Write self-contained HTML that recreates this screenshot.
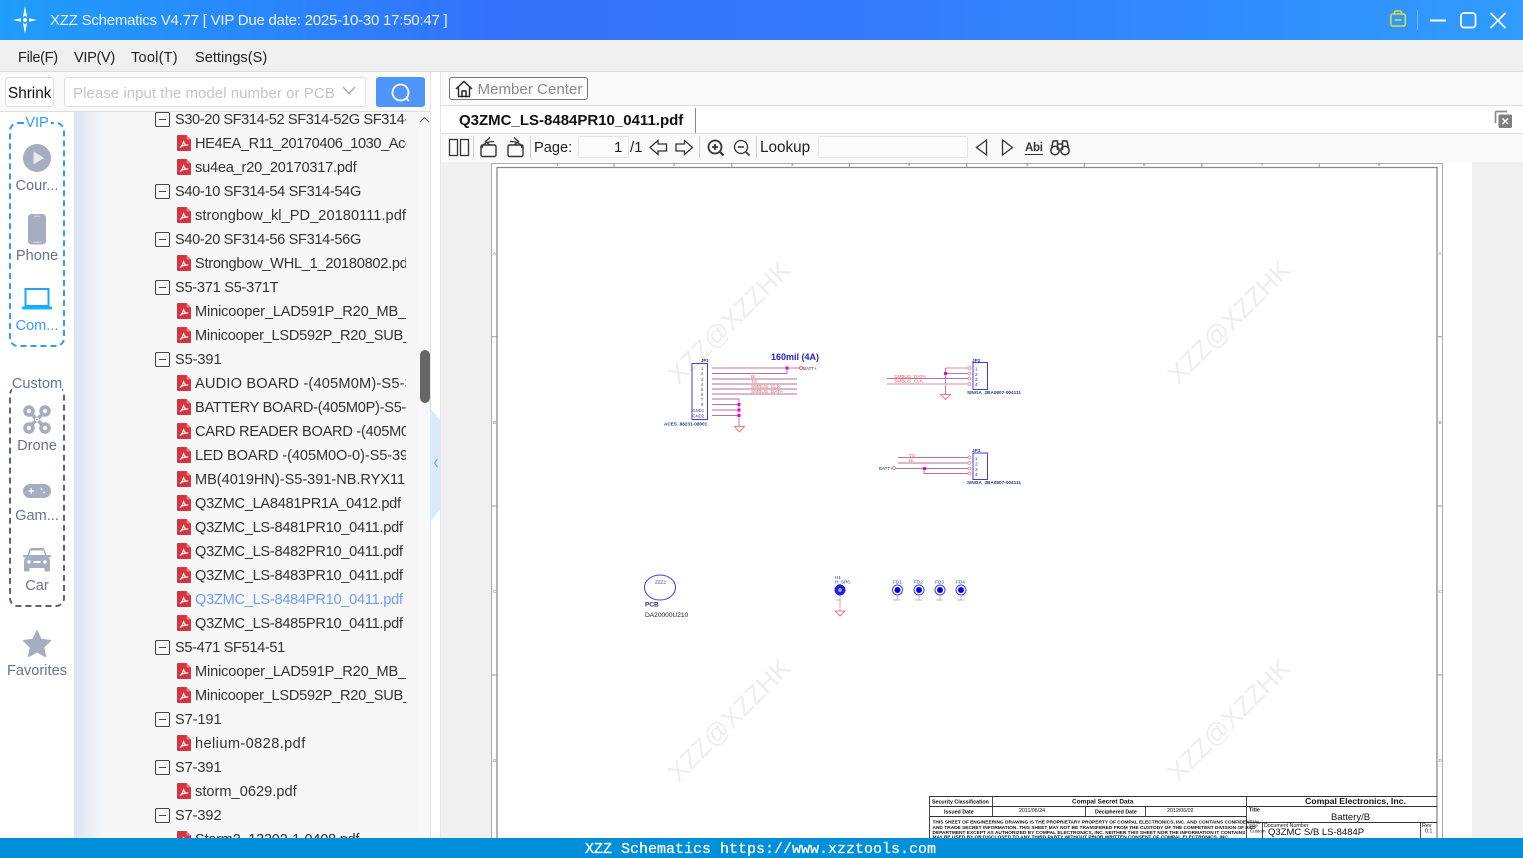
<!DOCTYPE html>
<html><head><meta charset="utf-8"><title>XZZ Schematics</title>
<style>
*{box-sizing:border-box}
html,body{margin:0;padding:0;width:1523px;height:858px;overflow:hidden;background:#fff}
body{font-family:"Liberation Sans","Noto Sans CJK SC",sans-serif;font-size:15px;color:#222;position:relative}
.a{position:absolute}
.t{position:absolute;white-space:nowrap;line-height:20px}
#title{left:0;top:0;width:1523px;height:40px;background:linear-gradient(90deg,#1f9dfb 0,#3373fb 32%,#3478fb 55%,#2f9cfe 100%)}
#menu{left:0;top:40px;width:1523px;height:32px;background:#f0f0f0;border-bottom:1px solid #dcdcdc}
#tree{left:74px;top:112px;width:344px;height:726px;background:linear-gradient(90deg,#d9e3f4 0,#e8ecf5 12px,#f7f7f7 30px);overflow:hidden}
.r{position:absolute;left:0;width:332px;height:24px;line-height:27px;white-space:nowrap;overflow:hidden;color:#333;font-size:14.6px;letter-spacing:-.27px}
.g{padding-left:101px}
.f{padding-left:121px}
.g:before{content:"";position:absolute;left:81px;top:5px;width:13px;height:13px;border:1.3px solid #444;border-radius:2px;background:linear-gradient(#444,#444) center/7px 1.3px no-repeat}
.r svg{position:absolute;left:103px;top:4px;width:14px;height:16px}
.lab{position:absolute;left:0;width:74px;text-align:center;font-size:14.6px;color:#68738c;line-height:21px;white-space:nowrap}
</style></head>
<body>
<svg width="0" height="0" style="position:absolute"><defs>
<symbol id="pdf" viewBox="0 0 14 16"><path d="M1 0H9.500L14 4.500V15a1 1 0 0 1-1 1H1a1 1 0 0 1-1-1V1a1 1 0 0 1 1-1Z" fill="#d6353f"/><path d="M9.500 0L14 4.500H9.500Z" fill="#e47f86"/><path d="M3 12.500C5 11.500 6.500 8 6.500 5.800 6.800 8.500 8.500 10.300 11.200 10.200 8.500 9.700 5.200 10.500 3 12.500Z" fill="none" stroke="#fff" stroke-width="1.100"/></symbol>
</defs></svg>

<!-- title bar -->
<div id="title" class="a"></div>
<svg class="a" style="left:11px;top:5px" width="28" height="30" viewBox="0 0 28 30"><path d="M14 1L16.200 12.500 14 10.500 11.800 12.500ZM14 29L11.800 17.500 14 19.500 16.200 17.500ZM2 15L10 13.300 10 16.700ZM26 15L18 13.300 18 16.700Z" fill="#fff"/><circle cx="14" cy="15" r="2" fill="#fff"/></svg>
<div class="t" style="left:50px;top:11px;color:#e8f2ff;font-size:15px;letter-spacing:-.23px">XZZ Schematics V4.77 [ VIP Due date: 2025-10-30 17:50:47 ]</div>
<svg class="a" style="left:1385px;top:8px" width="130" height="24" viewBox="0 0 130 24" fill="none"><g stroke="#d6e23e" stroke-width="1.500"><rect x="5.800" y="6" width="14.500" height="12" rx="2"/><path d="M9.500 6V4.500a1.500 1.500 0 0 1 1.500-1.500h4a1.500 1.500 0 0 1 1.500 1.500V6M9.500 12H16.500"/></g><path d="M32.500 2V22" stroke="#6fb9fb"/><path d="M45 12.500H61" stroke="#fff" stroke-width="2"/><rect x="76" y="5" width="14.500" height="14.500" rx="3" stroke="#fff" stroke-width="1.700"/><path d="M105.500 5L120.500 20M120.500 5L105.500 20" stroke="#fff" stroke-width="1.700"/></svg>

<!-- menu -->
<div id="menu" class="a"></div>
<div class="t" style="left:18px;top:47.500px;font-size:14.600px;letter-spacing:-.35px">File(F)</div>
<div class="t" style="left:74px;top:47.500px;font-size:14.600px;letter-spacing:-.35px">VIP(V)</div>
<div class="t" style="left:131px;top:47.500px;font-size:14.600px;letter-spacing:.2px">Tool(T)</div>
<div class="t" style="left:195px;top:47.500px;font-size:14.600px">Settings(S)</div>

<!-- left top row -->
<div class="a" style="left:0;top:72px;width:430px;height:40px;background:#fafafa;border-bottom:1px solid #ddd"></div>
<div class="a" style="left:5px;top:77px;width:49px;height:30px;background:#fdfdfd;border:1px solid #ddd;border-radius:3px"></div>
<div class="t" style="left:8px;top:84px;color:#111;font-size:15.300px">Shrink</div>
<div class="a" style="left:64px;top:77px;width:302px;height:30px;background:#fff;border:1px solid #dcdfe6;border-radius:3px"></div>
<div class="t" style="left:73px;top:84px;color:#c2c5cc;font-size:15.100px">Please input the model number or PCB</div>
<svg class="a" style="left:342px;top:85px" width="14" height="12" viewBox="0 0 14 12" fill="none"><path d="M1 2L7 8.500 13 2" stroke="#a9acb3" stroke-width="1.400"/></svg>
<div class="a" style="left:376px;top:77px;width:49px;height:30px;background:#4f95fb;border-radius:3px"></div>
<svg class="a" style="left:389px;top:81px" width="24" height="24" viewBox="0 0 24 24" fill="none"><circle cx="11.500" cy="11.500" r="8" stroke="#fff" stroke-width="1.800"/><path d="M17.500 17.500L20 20" stroke="#fff" stroke-width="1.800"/></svg>

<!-- sidebar -->
<div class="a" style="left:9px;top:122px;width:56px;height:225px;border:2px dashed #2f9bfd;border-radius:9px"></div>
<div class="a" style="left:25px;top:114px;width:26px;height:16px;background:#fff"></div>
<div class="lab" style="top:113px;color:#2f9bfd;font-size:14.500px">VIP</div>
<svg class="a" style="left:23px;top:144px" width="28" height="28" viewBox="0 0 28 28"><circle cx="14" cy="14" r="14" fill="#a6adc0"/><path d="M10.500 7.500L21 14 10.500 20.500Z" fill="#e8eaf0"/></svg>
<div class="lab" style="top:176px">Cour...</div>
<svg class="a" style="left:28px;top:214px" width="18" height="31" viewBox="0 0 18 31"><rect width="18" height="30.500" rx="3.500" fill="#a6adc0"/><path d="M6 2.200H12M5 28.300H13" stroke="#d8dbe4" stroke-width="1"/></svg>
<div class="lab" style="top:246px">Phone</div>
<svg class="a" style="left:22px;top:288px" width="30" height="22" viewBox="0 0 30 22"><rect x="3.500" y="1" width="23" height="17" fill="none" stroke="#1ea5fb" stroke-width="2"/><path d="M0 18.500H30V20a1.500 1.500 0 0 1-1.500 1.500H1.500A1.500 1.500 0 0 1 0 20Z" fill="#0fb8fb"/></svg>
<div class="lab" style="top:316px;color:#3a9cfb">Com...</div>

<div class="a" style="left:9px;top:386px;width:56px;height:221px;border:2px dashed #5a6378;border-radius:9px"></div>
<div class="a" style="left:12px;top:375px;width:50px;height:16px;background:#fff"></div>
<div class="lab" style="top:374px">Custom</div>
<svg class="a" style="left:23px;top:405px" width="28" height="29" viewBox="0 0 28 29" fill="none" stroke="#a6adc0"><g stroke-width="3.600"><circle cx="6" cy="6" r="4"/><circle cx="22" cy="6" r="4"/><circle cx="6" cy="23" r="4"/><circle cx="22" cy="23" r="4"/><path d="M8 8.500L20 20.500M20 8.500L8 20.500"/></g><circle cx="14" cy="14.500" r="1.500" stroke="#fff" stroke-width="1"/></svg>
<div class="lab" style="top:436px">Drone</div>
<svg class="a" style="left:23px;top:484px" width="28" height="14" viewBox="0 0 28 14"><rect width="28" height="14" rx="7" fill="#a6adc0"/><path d="M5.500 7H11M8.200 4.300V9.700" stroke="#fff" stroke-width="1.300"/><circle cx="18.500" cy="5" r=".9" fill="#fff"/><circle cx="21" cy="8.500" r=".9" fill="#fff"/></svg>
<div class="lab" style="top:506px">Gam...</div>
<svg class="a" style="left:23px;top:548px" width="28" height="24" viewBox="0 0 28 24"><path d="M6.500 1.500Q7 0 9 0H19Q21 0 21.500 1.500L23.500 7H27a1 1 0 0 1 1 1v1L25.500 9.500Q27 11 27 13V22.500a1 1 0 0 1-1 1H22.500a1 1 0 0 1-1-1V20H6.500V22.500a1 1 0 0 1-1 1H2a1 1 0 0 1-1-1V13Q1 11 2.500 9.500L0 9V8a1 1 0 0 1 1-1H4.500Z" fill="#a6adc0"/><path d="M7.500 2.500H20.500L22 7H6Z" fill="#fff"/><circle cx="6" cy="14" r="1.700" fill="#fff"/><circle cx="22" cy="14" r="1.700" fill="#fff"/><path d="M10.500 14H17.500" stroke="#fff" stroke-width="2"/></svg>
<div class="lab" style="top:576px">Car</div>
<svg class="a" style="left:23px;top:630px" width="28" height="28" viewBox="0 0 28 28"><path d="M14 0.500L18.200 9.300 27.800 10.500 20.800 17.100 22.600 26.700 14 22 5.400 26.700 7.200 17.100 0.200 10.500 9.800 9.300Z" fill="#a6adc0" stroke="#a6adc0" stroke-linejoin="round"/></svg>
<div class="lab" style="top:661px">Favorites</div>

<!-- tree -->
<div id="tree" class="a">
<div class="r g" style="top:-5px;letter-spacing:-.4px">S30-20 SF314-52 SF314-52G SF314-54</div>
<div class="r f" style="top:19px;letter-spacing:-.4px"><svg><use href="#pdf"/></svg>HE4EA_R11_20170406_1030_Acer.pdf</div>
<div class="r f" style="top:43px;letter-spacing:-.22px"><svg><use href="#pdf"/></svg>su4ea_r20_20170317.pdf</div>
<div class="r g" style="top:67px;letter-spacing:-.35px">S40-10 SF314-54 SF314-54G</div>
<div class="r f" style="top:91px;letter-spacing:.05px"><svg><use href="#pdf"/></svg>strongbow_kl_PD_20180111.pdf</div>
<div class="r g" style="top:115px;letter-spacing:-.35px">S40-20 SF314-56 SF314-56G</div>
<div class="r f" style="top:139px"><svg><use href="#pdf"/></svg>Strongbow_WHL_1_20180802.pdf</div>
<div class="r g" style="top:163px">S5-371 S5-371T</div>
<div class="r f" style="top:187px;letter-spacing:-.15px"><svg><use href="#pdf"/></svg>Minicooper_LAD591P_R20_MB_A</div>
<div class="r f" style="top:211px"><svg><use href="#pdf"/></svg>Minicooper_LSD592P_R20_SUB_A</div>
<div class="r g" style="top:235px;letter-spacing:-.1px">S5-391</div>
<div class="r f" style="top:259px;letter-spacing:.18px"><svg><use href="#pdf"/></svg>AUDIO BOARD -(405M0M)-S5-391</div>
<div class="r f" style="top:283px"><svg><use href="#pdf"/></svg>BATTERY BOARD-(405M0P)-S5-391</div>
<div class="r f" style="top:307px"><svg><use href="#pdf"/></svg>CARD READER BOARD -(405M0</div>
<div class="r f" style="top:331px;letter-spacing:-.1px"><svg><use href="#pdf"/></svg>LED BOARD -(405M0O-0)-S5-391</div>
<div class="r f" style="top:355px;letter-spacing:-.04px"><svg><use href="#pdf"/></svg>MB(4019HN)-S5-391-NB.RYX11</div>
<div class="r f" style="top:379px"><svg><use href="#pdf"/></svg>Q3ZMC_LA8481PR1A_0412.pdf</div>
<div class="r f" style="top:403px"><svg><use href="#pdf"/></svg>Q3ZMC_LS-8481PR10_0411.pdf</div>
<div class="r f" style="top:427px"><svg><use href="#pdf"/></svg>Q3ZMC_LS-8482PR10_0411.pdf</div>
<div class="r f" style="top:451px"><svg><use href="#pdf"/></svg>Q3ZMC_LS-8483PR10_0411.pdf</div>
<div class="r f" style="top:475px;color:#6f9dfb"><svg><use href="#pdf"/></svg>Q3ZMC_LS-8484PR10_0411.pdf</div>
<div class="r f" style="top:499px"><svg><use href="#pdf"/></svg>Q3ZMC_LS-8485PR10_0411.pdf</div>
<div class="r g" style="top:523px;letter-spacing:-.35px">S5-471 SF514-51</div>
<div class="r f" style="top:547px;letter-spacing:-.15px"><svg><use href="#pdf"/></svg>Minicooper_LAD591P_R20_MB_A</div>
<div class="r f" style="top:571px"><svg><use href="#pdf"/></svg>Minicooper_LSD592P_R20_SUB_A</div>
<div class="r g" style="top:595px;letter-spacing:-.1px">S7-191</div>
<div class="r f" style="top:619px;letter-spacing:.4px"><svg><use href="#pdf"/></svg>helium-0828.pdf</div>
<div class="r g" style="top:643px;letter-spacing:-.1px">S7-391</div>
<div class="r f" style="top:667px;letter-spacing:.02px"><svg><use href="#pdf"/></svg>storm_0629.pdf</div>
<div class="r g" style="top:691px;letter-spacing:-.1px">S7-392</div>
<div class="r f" style="top:715px"><svg><use href="#pdf"/></svg>Storm2_13302-1-0408.pdf</div>
</div>

<!-- scrollbar & splitter -->
<div class="a" style="left:418px;top:112px;width:12px;height:726px;background:#f8f8f8"></div>
<svg class="a" style="left:419px;top:116px" width="11" height="8" viewBox="0 0 11 8" fill="none"><path d="M1 6L5.500 1.500 10 6" stroke="#666" stroke-width="1.100"/></svg>
<div class="a" style="left:420px;top:350px;width:10px;height:53px;background:#666;border-radius:5px"></div>
<div class="a" style="left:430px;top:72px;width:1px;height:766px;background:#e6e6e6"></div>
<div class="a" style="left:440px;top:72px;width:1px;height:766px;background:#e6e6e6"></div>
<svg class="a" style="left:430px;top:408px" width="11" height="114" viewBox="0 0 11 114"><path d="M0 0L10 12V102L0 114Z" fill="#d9eafb"/><path d="M7.500 51L4.500 55 7.500 59" fill="none" stroke="#6aa9ec" stroke-width="1.100"/></svg>

<!-- right panel -->
<div class="a" style="left:441px;top:72px;width:1082px;height:34px;background:#fafafa;border-bottom:1px solid #ddd"></div>
<div class="a" style="left:449px;top:77px;width:139px;height:23px;border:1px solid #777;border-radius:3px;background:#fbfbfb"></div>
<svg class="a" style="left:455px;top:80px" width="18" height="18" viewBox="0 0 18 18" fill="none" stroke="#222" stroke-width="1.400"><path d="M1 9L9 1.500 17 9M3.500 7.500V16.500H14.500V7.500M7 16.500V11H11V16.500"/></svg>
<div class="t" style="left:477.500px;top:79.500px;color:#8a8a8a;font-size:15.100px">Member Center</div>

<div class="a" style="left:441px;top:106px;width:1082px;height:28px;background:#fff;border-bottom:1px solid #ddd"></div>
<div class="t" style="left:459px;top:110.500px;font-weight:bold;color:#111;font-size:15px">Q3ZMC_LS-8484PR10_0411.pdf</div>
<div class="a" style="left:695px;top:108px;width:1px;height:25px;background:#888"></div>
<svg class="a" style="left:1494px;top:110px" width="19" height="19" viewBox="0 0 19 19"><path d="M13 1.500H2.500a1 1 0 0 0-1 1V13" fill="none" stroke="#8a8a8a" stroke-width="1.700"/><rect x="4.500" y="4.500" width="13.500" height="13.500" rx="1.500" fill="#7f7f7f"/><path d="M8.500 8.500L14 14M14 8.500L8.500 14" stroke="#fff" stroke-width="1.500"/></svg>

<div class="a" style="left:441px;top:134px;width:1082px;height:28px;background:#fafafa"></div>
<svg class="a" style="left:445px;top:134px" width="640" height="28" viewBox="445 134 640 28" fill="none" stroke="#333" stroke-width="1.300">
<rect x="449.500" y="139.500" width="8" height="16"/><rect x="460.500" y="139.500" width="8" height="16"/>
<path d="M473.500 136V158M530.500 136V158M699.500 136V158M756.500 136V158" stroke="#ccc" stroke-width="1"/>
<rect x="481" y="145" width="15" height="11.500" rx="1.500" stroke-width="1.400"/><path d="M482 148Q483 141.500 494 141.500M490 137.500L485.500 141.500 490 145"/>
<rect x="508" y="145" width="15" height="11.500" rx="1.500" stroke-width="1.400"/><path d="M522 148Q521 141.500 510 141.500M514 137.500L518.500 141.500 514 145"/>
<path d="M650 147.500L658 140.500V144H666.500V151H658V154.500Z"/>
<path d="M692.500 147.500L684.500 140.500V144H676V151H684.500V154.500Z"/>
<circle cx="715" cy="147" r="6.500" stroke-width="1.800"/><path d="M720 152L723.500 155.500" stroke-width="2"/><path d="M712 147H718M715 144V150" stroke-width="1.800"/>
<circle cx="741" cy="147" r="6.500"/><path d="M746 152L749.500 155.500" stroke-width="1.600"/><path d="M738 147H744" stroke-width="1.500"/>
<path d="M986.500 140L976.500 147.500 986.500 155Z"/>
<path d="M1002.500 140L1012.500 147.500 1002.500 155Z"/>
<path d="M1025 154.500H1043" stroke-width="1"/>
<circle cx="1055" cy="150.500" r="4.200" stroke-width="1.500"/><circle cx="1065" cy="150.500" r="4.200" stroke-width="1.500"/><path d="M1051.500 149L1053 141H1057.500V150M1068.500 149L1067 141H1062.500V150M1057.500 144H1062.500" stroke-width="1.500"/>
</svg>
<div class="t" style="left:534px;top:138px;font-size:14.600px">Page:</div>
<div class="a" style="left:578px;top:136px;width:51px;height:22px;background:#fcfcfc;border:1px solid #e6e6e6;border-radius:2px"></div>
<div class="t" style="left:614px;top:138px">1</div>
<div class="t" style="left:630px;top:138px">/1</div>
<div class="t" style="left:760px;top:138px;font-size:15.300px">Lookup</div>
<div class="a" style="left:818px;top:136px;width:150px;height:22px;background:#fcfcfc;border:1px solid #e6e6e6;border-radius:2px"></div>
<div class="t" style="left:1025px;top:141px;font-size:11.500px;font-weight:bold;color:#333;letter-spacing:-.3px;line-height:14px">Abi</div>

<!-- pdf view -->
<div class="a" style="left:441px;top:162px;width:1082px;height:676px;background:#f0f0f0"></div>
<div class="a" style="left:492px;top:162px;width:980px;height:676px;background:#fff"></div>
<svg class="a" style="left:0;top:0" width="1523" height="838" viewBox="0 0 1523 838">
<g fill="none" stroke="#8a8a8a">
<path d="M491.500 838V163.500H1442.500V838" stroke="#aaa"/>
<path d="M497 838V167.500H1437V838" stroke-width="1.300"/>
<path d="M614 163.500V167M731.800 163.500V167M849.300 163.500V167M966.800 163.500V167M1084.300 163.500V167M1201.800 163.500V167M1319.300 163.500V167M491.500 336.700H497M491.500 506H497M491.500 675H497M1437 336.700H1442M1437 506H1442M1437 675H1442" stroke="#999"/>
</g>
<g font-family="Liberation Sans" font-size="4.500" fill="#777"><text x="556" y="166">1</text><text x="673" y="166">2</text><text x="791" y="166">3</text><text x="908" y="166">4</text><text x="1026" y="166">5</text><text x="1143" y="166">6</text><text x="1261" y="166">7</text><text x="1378" y="166">8</text>
<text x="493" y="255">A</text><text x="493" y="424">B</text><text x="493" y="593">C</text><text x="493" y="762">D</text><text x="1438.500" y="255">A</text><text x="1438.500" y="424">B</text><text x="1438.500" y="593">C</text><text x="1438.500" y="762">D</text></g>

<g font-family="Liberation Sans" font-size="26" fill="#eeeeee" text-anchor="middle">
<text transform="translate(729,322) rotate(-45) translate(0,9)">XZZ@XZZHK</text>
<text transform="translate(1229,322) rotate(-45) translate(0,9)">XZZ@XZZHK</text>
<text transform="translate(729,720) rotate(-45) translate(0,9)">XZZ@XZZHK</text>
<text transform="translate(1229,720) rotate(-45) translate(0,9)">XZZ@XZZHK</text>
</g>

<!-- JP1 -->
<rect x="692" y="363.500" width="15.500" height="56" fill="none" stroke="#3b3bf0" stroke-width="1"/>
<g fill="none" stroke="#b6729a" stroke-width=".9">
<path d="M712 368H799" stroke="#dcb6c6" stroke-width="1.800"/>
<path d="M712 373.500H787V368M712 379H797M712 384H797M712 389H797M712 394H797M712 399H739V426M712 404.500H739M712 410H739M712 415.500H739"/>
</g>
<g fill="#e800e8"><rect x="785.500" y="366.500" width="3" height="3"/><rect x="737.500" y="403" width="3" height="3"/><rect x="737.500" y="408.500" width="3" height="3"/><rect x="737.500" y="414" width="3" height="3"/></g>
<circle cx="801" cy="368" r="1.500" fill="#fff" stroke="#e66"/>
<path d="M734.500 426.500H744.500L739.500 432Z" fill="none" stroke="#f07a7a"/>
<g font-family="Liberation Sans" font-size="4.500" fill="#334">
<text x="803" y="370">BATT+</text></g>
<g font-family="Liberation Sans" font-size="4.800" fill="#f05a5a"><text x="751" y="378">BI</text><text x="751" y="383">TS</text><text x="751" y="388">SMBUS_CLK</text><text x="751" y="393">SMBUS_DATA</text></g>
<g font-family="Liberation Sans" font-size="4.200" fill="#3b3b9a"><text x="701" y="362" font-weight="bold" fill="#224">JP1</text><text x="701" y="370">1</text><text x="701" y="375">2</text><text x="701" y="381">3</text><text x="701" y="386">4</text><text x="701" y="391">5</text><text x="701" y="396">6</text><text x="701" y="401">7</text><text x="701" y="406">8</text><text x="692.500" y="412">GND1</text><text x="692.500" y="417.500">GND2</text></g>
<text x="664" y="425.500" font-family="Liberation Sans" font-size="4.700" font-weight="bold" fill="#223a8a">ACES_88231-08001</text>
<text x="771" y="360" font-family="Liberation Sans" font-size="9" font-weight="bold" fill="#1f1fd0">160mil (4A)</text>

<!-- JP2 -->
<rect x="973" y="362.500" width="14.500" height="27" fill="none" stroke="#3b3bf0"/>
<g fill="none" stroke="#b6729a" stroke-width=".9">
<path d="M945.500 368H968" stroke="#dcb6c6" stroke-width="1.500"/>
<path d="M945.500 368V394M945.500 373.500H968M887 378.500H968"/>
<path d="M887 384H968" stroke="#dcb6c6" stroke-width="1.500"/>
</g>
<rect x="944" y="372" width="3" height="3" fill="#e800e8"/>
<path d="M940.500 394.500H950.500L945.500 399.500Z" fill="none" stroke="#f07a7a"/>
<g font-family="Liberation Sans" font-size="4.800" fill="#f05a5a"><text x="894" y="378">SMBUS_DATA</text><text x="894" y="382.500">SMBUS_CLK</text></g>
<g font-family="Liberation Sans" font-size="4.700" fill="#223a8a"><text x="972" y="362" font-weight="bold">JP2</text><text x="975" y="370.500">1</text><text x="975" y="376">2</text><text x="975" y="381">3</text><text x="975" y="386">4</text><text x="967" y="394" font-weight="bold">SINGA_2BA0807-004111</text></g>
<g fill="none" stroke="#e88" stroke-width=".8"><circle cx="969.500" cy="368" r="1.500"/><circle cx="969.500" cy="373.500" r="1.500"/><circle cx="969.500" cy="378.500" r="1.500"/><circle cx="969.500" cy="384" r="1.500"/><circle cx="969.500" cy="457.500" r="1.500"/><circle cx="969.500" cy="463" r="1.500"/><circle cx="969.500" cy="468.500" r="1.500"/><circle cx="969.500" cy="473.500" r="1.500"/></g>

<!-- JP3 -->
<rect x="973" y="453" width="14.500" height="26.500" fill="none" stroke="#3b3bf0"/>
<g fill="none" stroke="#b6729a" stroke-width=".9"><path d="M898 457.500H968M898 463H968M896 468.500H968M924 468.500V473.500H968"/></g>
<rect x="923" y="467" width="3" height="3" fill="#e800e8"/>
<circle cx="894" cy="468" r="1.500" fill="#fff" stroke="#e66" stroke-width=".8"/>
<g font-family="Liberation Sans" font-size="4.800" fill="#f05a5a"><text x="909" y="457">TS</text><text x="909" y="462">BI</text></g>
<text x="879" y="470" font-family="Liberation Sans" font-size="4.500" fill="#334">BATT+</text>
<g font-family="Liberation Sans" font-size="4.700" fill="#223a8a"><text x="972" y="452" font-weight="bold">JP3</text><text x="975" y="460">1</text><text x="975" y="465.500">2</text><text x="975" y="471">3</text><text x="975" y="476">4</text><text x="967" y="484" font-weight="bold">SINGA_2BA0807-004111</text></g>

<!-- PCB -->
<ellipse cx="660" cy="587.500" rx="15.500" ry="12.500" fill="none" stroke="#3b3bf0"/>
<g font-family="Liberation Sans" fill="#1f2f8a"><text x="655" y="583.500" font-size="4.700">ZZZ1</text><text x="645" y="606.500" font-size="6.500" font-weight="bold">PCB</text><text x="645" y="617" font-size="6.600" fill="#222">DA20000U210</text></g>

<!-- H1 / FD -->
<path d="M840 595V611" stroke="#e8a0a0"/>
<path d="M835 611H845L840 616Z" fill="none" stroke="#f07a7a"/>
<circle cx="840" cy="590" r="5.500" fill="#1f1fe0"/><circle cx="840" cy="590" r="2" fill="#9a9af8"/>
<g font-family="Liberation Sans" font-size="4.700" fill="#223a8a"><text x="835" y="579">H1</text><text x="835" y="583.500">H_SP6</text><text x="893" y="583.500">FD1</text><text x="914" y="583.500">FD2</text><text x="935" y="583.500">FD3</text><text x="956" y="583.500">FD4</text></g>
<g fill="#fff" stroke="#3b3bf0"><circle cx="897.500" cy="590" r="5"/><circle cx="919" cy="590" r="5"/><circle cx="940" cy="590" r="5"/><circle cx="961" cy="590" r="5"/></g>
<g fill="#0000e8"><circle cx="897.500" cy="590" r="3"/><circle cx="919" cy="590" r="3"/><circle cx="940" cy="590" r="3"/><circle cx="961" cy="590" r="3"/></g>
<path d="M897.500 595V600M919 595V600M940 595V600M961 595V600" stroke="#e8a0a0"/>
<path d="M893 600H900M915 600H922M936 600H943M957 600H964M836 600H841" stroke="#bbb"/>

<!-- title block -->
<g fill="none" stroke="#333" stroke-width=".9">
<path d="M929.500 838V796.500H1437M929.500 806.500H1246.500M929.500 816.500H1246.500M992.500 796.500V816.500M1085.500 806.500V816.500M1145.500 806.500V816.500M1246.500 796.500V838M1246.500 806.500H1437M1246.500 822.500H1437M1262.500 822.500V838M1420.500 822.500V838"/>
</g>
<g font-family="Liberation Sans" fill="#111" font-size="5.300">
<text x="932" y="803.500" font-weight="bold">Security Classification</text>
<text x="1072" y="803.500" font-size="6.500" font-weight="bold">Compal Secret Data</text>
<text x="1305" y="804" font-size="8.700" font-weight="bold">Compal Electronics, Inc.</text>
<text x="944" y="813.500" font-weight="bold">Issued Date</text>
<text x="1019" y="812">2011/06/24</text>
<text x="1095" y="813.500" font-weight="bold">Deciphered Date</text>
<text x="1167" y="812">2012/06/02</text>
<text x="1249" y="811.500" font-weight="bold">Title</text>
<text x="1331" y="820" font-size="9.500">Battery/B</text>
<text x="1264" y="827">Document Number</text>
<text x="1422" y="827">Rev</text>
<text x="1425" y="832.500">0.1</text>
<text x="1268" y="835" font-size="9.500">Q3ZMC S/B LS-8484P</text>
<text x="1249" y="827" font-size="4.500">Size</text>
<text x="1250" y="832.500" font-size="4.500">Custom</text>
<g font-size="4.800" font-weight="bold">
<text x="932.500" y="823.500">THIS SHEET OF ENGINEERING DRAWING IS THE PROPRIETARY PROPERTY OF COMPAL ELECTRONICS, INC. AND CONTAINS CONFIDENTIAL</text>
<text x="932.500" y="829">AND TRADE SECRET INFORMATION. THIS SHEET MAY NOT BE TRANSFERED FROM THE CUSTODY OF THE COMPETENT DIVISION OF R&amp;D</text>
<text x="932.500" y="834">DEPARTMENT EXCEPT AS AUTHORIZED BY COMPAL ELECTRONICS, INC. NEITHER THIS SHEET NOR THE INFORMATION IT CONTAINS</text>
<text x="932.500" y="838.500">MAY BE USED BY OR DISCLOSED TO ANY THIRD PARTY WITHOUT PRIOR WRITTEN CONSENT OF COMPAL ELECTRONICS, INC.</text>
</g>
</g>
</svg>

<!-- footer -->
<div class="a" style="left:0;top:838px;width:1523px;height:20px;background:#0090d9"></div>
<div class="t" style="left:585px;top:841px;height:17px;color:#fff;font-family:'Liberation Mono',monospace;font-size:15px;line-height:17px;-webkit-text-stroke:.25px #fff">XZZ Schematics https://www.xzztools.com</div>
</body></html>
